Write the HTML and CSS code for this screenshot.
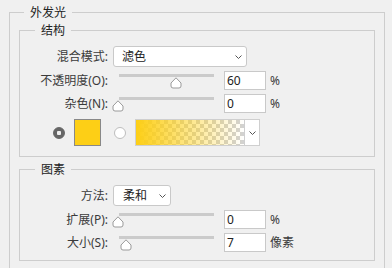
FILE: index.html
```html
<!DOCTYPE html>
<html lang="zh">
<head>
    <meta charset="UTF-8">
    <title>外发光</title>
    <link rel="stylesheet" href="styles.css">
</head>
<body>

<fieldset class="group outer">
    <legend>外发光</legend>

    <!-- 结构 -->
    <fieldset class="group inner first">
        <legend>结构</legend>
        <div class="row tall">
            <label class="lbl">混合模式:</label>
            <div class="select wide">
                <span>滤色</span>
                <svg class="chev" width="7" height="4" viewBox="0 0 7 4"><path d="M0.5 0.5 L3.5 3.5 L6.5 0.5" fill="none" stroke="#555" stroke-width="1"/></svg>
            </div>
        </div>
        <div class="row">
            <label class="lbl">不透明度(O):</label>
            <div class="slider">
                <div class="track"></div>
                <svg class="thumb" style="left:57px" width="12" height="12" viewBox="0 0 12 12"><path d="M6 0.8 L11 6 V9 Q11 11 9 11 H3 Q1 11 1 9 V6 Z" fill="#fff" stroke="#9a9a9a"/></svg>
            </div>
            <div class="num">60</div>
            <span class="unit">%</span>
        </div>
        <div class="row gap-lg">
            <label class="lbl">杂色(N):</label>
            <div class="slider">
                <div class="track"></div>
                <svg class="thumb" style="left:-1px" width="12" height="12" viewBox="0 0 12 12"><path d="M6 0.8 L11 6 V9 Q11 11 9 11 H3 Q1 11 1 9 V6 Z" fill="#fff" stroke="#9a9a9a"/></svg>
            </div>
            <div class="num">0</div>
            <span class="unit">%</span>
        </div>
        <div class="row colors">
            <span class="radio on"></span>
            <span class="swatch"></span>
            <span class="radio"></span>
            <div class="grad"></div>
            <div class="grad-btn">
                <svg width="7" height="4" viewBox="0 0 7 4"><path d="M0.5 0.5 L3.5 3.5 L6.5 0.5" fill="none" stroke="#555" stroke-width="1"/></svg>
            </div>
        </div>
    </fieldset>

    <!-- 图素 -->
    <fieldset class="group inner second">
        <legend>图素</legend>
        <div class="row tall">
            <label class="lbl">方法:</label>
            <div class="select narrow">
                <span>柔和</span>
                <svg class="chev" width="7" height="4" viewBox="0 0 7 4"><path d="M0.5 0.5 L3.5 3.5 L6.5 0.5" fill="none" stroke="#555" stroke-width="1"/></svg>
            </div>
        </div>
        <div class="row">
            <label class="lbl">扩展(P):</label>
            <div class="slider">
                <div class="track"></div>
                <svg class="thumb" style="left:-1px" width="12" height="12" viewBox="0 0 12 12"><path d="M6 0.8 L11 6 V9 Q11 11 9 11 H3 Q1 11 1 9 V6 Z" fill="#fff" stroke="#9a9a9a"/></svg>
            </div>
            <div class="num">0</div>
            <span class="unit">%</span>
        </div>
        <div class="row last">
            <label class="lbl">大小(S):</label>
            <div class="slider">
                <div class="track"></div>
                <svg class="thumb" style="left:7px" width="12" height="12" viewBox="0 0 12 12"><path d="M6 0.8 L11 6 V9 Q11 11 9 11 H3 Q1 11 1 9 V6 Z" fill="#fff" stroke="#9a9a9a"/></svg>
            </div>
            <div class="num">7</div>
            <span class="unit">像素</span>
        </div>
    </fieldset>
</fieldset>

</body>
</html>
```

FILE: styles.css
```css
body {
    margin: 0;
    height: 268px;
    overflow: hidden;
    background: #f0f0f0;
    font-family: "Noto Sans", "Noto Sans CJK SC", sans-serif;
    font-size: 12px;
    line-height: 16px;
    color: #3a3a3a;
}

.group {
    border: 1px solid #cdcdcd;
    margin: 0;
    padding: 0;
    min-width: 0;
}

.group legend {
    padding: 0 6px;
    line-height: 17px;
    color: #222;
}

.outer {
    margin: 4px 7px 0 9px;
    padding-bottom: 30px;
}

.outer > legend {
    margin-left: 14px;
}

.inner {
    margin: 1px 9px 0;
    padding: 7px 0 10px;
}

.inner legend {
    margin-left: 15px;
}

.second {
    margin-top: 4px;
    padding-bottom: 8px;
}

.row {
    display: flex;
    align-items: center;
    height: 19px;
    margin-bottom: 4px;
}

.row.tall {
    height: 21px;
}

.row.gap-lg {
    margin-bottom: 6px;
}

.row.last {
    margin-bottom: 0;
}

.lbl {
    width: 88px;
    margin-right: 5px;
    text-align: right;
    white-space: nowrap;
}

/* dropdowns */
.select {
    box-sizing: border-box;
    height: 21px;
    display: flex;
    align-items: center;
    justify-content: space-between;
    padding: 0 4px 0 8px;
    background: #fff;
    border: 1px solid #c9c9c9;
    border-radius: 3px;
    color: #222;
}

.select.wide {
    width: 134px;
}

.select.narrow {
    width: 58px;
    padding-left: 9px;
}

.chev {
    margin-top: 1px;
}

/* sliders */
.slider {
    position: relative;
    width: 106px;
    height: 19px;
    margin-right: 5px;
}

.track {
    position: absolute;
    left: 6px;
    top: 3px;
    width: 95px;
    height: 3px;
    background: #cbcbcb;
}

.thumb {
    position: absolute;
    top: 6px;
}

.num {
    box-sizing: border-box;
    width: 42px;
    height: 19px;
    padding-left: 2px;
    line-height: 17px;
    background: #fff;
    border: 1px solid #c9c9c9;
    color: #222;
}

.unit {
    margin-left: 4px;
}

/* colour row */
.row.colors {
    height: 27px;
    margin-bottom: 0;
    padding-left: 33px;
}

.radio {
    box-sizing: border-box;
    width: 12px;
    height: 12px;
    border-radius: 50%;
    background: #fff;
    border: 1px solid #bdbdbd;
}

.radio.on {
    background: radial-gradient(circle, #eee 0 2px, #666 2.5px);
    border-color: #666;
}

.swatch {
    box-sizing: border-box;
    width: 27px;
    height: 27px;
    margin: 0 13px 0 9px;
    background: #fdcf16;
    border: 1px solid #888;
}

.grad {
    box-sizing: border-box;
    width: 109px;
    height: 27px;
    margin-left: 9px;
    border: 1px solid #cfcfcf;
    border-right: none;
    background:
        linear-gradient(to right, #fdcf16, rgba(253, 207, 22, 0)),
        repeating-conic-gradient(#d2d2d2 0 25%, #fff 0 50%) 0 0 / 8px 8px;
}

.grad-btn {
    box-sizing: border-box;
    width: 16px;
    height: 27px;
    display: flex;
    align-items: center;
    justify-content: center;
    background: #fff;
    border: 1px solid #cfcfcf;
}
```
